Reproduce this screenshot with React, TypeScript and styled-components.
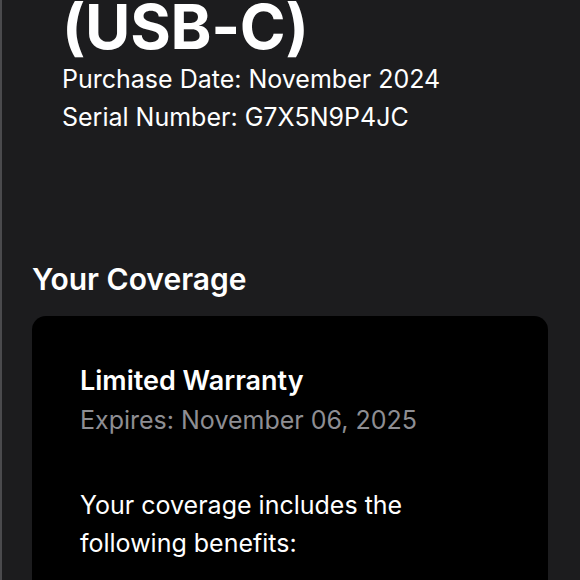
import styled, { createGlobalStyle } from "styled-components"

const GlobalStyle = createGlobalStyle`
    html, body {
        margin: 0;
        padding: 0;
        background: #1c1c1e;
        overflow: hidden;
    }
    body {
        font-family: Inter, "Noto Sans", sans-serif;
        color: #fff;
        -webkit-font-smoothing: antialiased;
    }
`

const Page = styled.div`
    min-height: 580px;
    box-sizing: border-box;
    border-left: 2px solid #4a4a4d;
    padding: 0 32px 0 30px;
    overflow: hidden;
`

const Header = styled.header`
    padding-left: 30px;
`

const Title = styled.h1`
    margin: -5px 0 0;
    font-size: 62px;
    line-height: 64px;
    font-weight: 700;
    letter-spacing: -0.3px;
`

const Meta = styled.div`
    margin-top: 1px;
`

const MetaLine = styled.p`
    margin: 0;
    font-size: 25px;
    line-height: 38px;
    font-weight: 400;
`

const SectionTitle = styled.h2`
    margin: 125px 0 19px;
    font-size: 30px;
    line-height: 36px;
    font-weight: 600;
`

const Card = styled.section`
    background: #000;
    border-radius: 14px;
    padding: 47px 48px 40px;
`

const CardTitle = styled.h3`
    margin: 0;
    font-size: 27px;
    line-height: 36px;
    font-weight: 600;
`

const Expires = styled.p`
    margin: 2px 0 0;
    font-size: 25px;
    line-height: 38px;
    color: #8e8e93;
`

const Body = styled.p`
    margin: 47px 0 0;
    font-size: 25px;
    line-height: 38px;
    max-width: 340px;
`

export default function App() {
    return (
        <>
            <GlobalStyle />
            <Page>
                <Header>
                    <Title>(USB-C)</Title>
                    <Meta>
                        <MetaLine>Purchase Date: November 2024</MetaLine>
                        <MetaLine>Serial Number: G7X5N9P4JC</MetaLine>
                    </Meta>
                </Header>
                <SectionTitle>Your Coverage</SectionTitle>
                <Card>
                    <CardTitle>Limited Warranty</CardTitle>
                    <Expires>Expires: November 06, 2025</Expires>
                    <Body>Your coverage includes the following benefits:</Body>
                </Card>
            </Page>
        </>
    )
}
